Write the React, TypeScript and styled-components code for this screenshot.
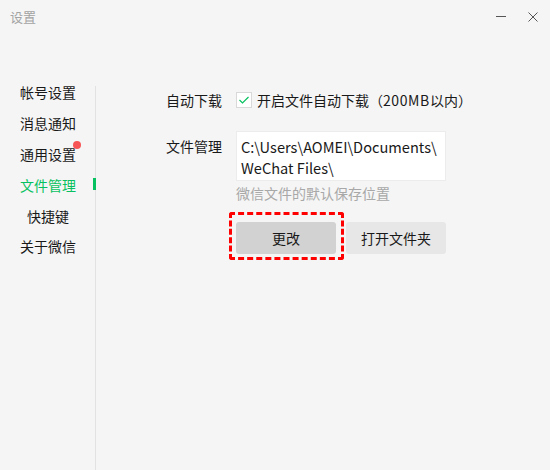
import styled, { createGlobalStyle } from 'styled-components';

const GlobalStyle = createGlobalStyle`
  html, body {
    margin: 0;
    padding: 0;
    background: #f5f5f5;
  }
  body {
    font-family: "Noto Sans CJK SC", "Noto Sans", sans-serif;
    color: #191919;
  }
`;

const Window = styled.div`
  width: 550px;
  height: 470px;
  background: #f5f5f5;
  display: flex;
  flex-direction: column;
  overflow: hidden;
`;

const TitleBar = styled.div`
  height: 77px;
  display: flex;
  align-items: flex-start;
  padding: 8px 12px 0 10px;
  box-sizing: border-box;
`;

const Title = styled.div`
  font-size: 13px;
  line-height: 18px;
  color: #a3a3a3;
  flex: 1;
`;

const Controls = styled.div`
  display: flex;
  gap: 22px;
  padding-top: 1px;
`;

const ControlButton = styled.button`
  width: 10px;
  height: 16px;
  padding: 0;
  border: none;
  background: none;
  display: flex;
  align-items: center;
  justify-content: center;
`;

const Body = styled.div`
  flex: 1;
  display: flex;
`;

const Sidebar = styled.nav`
  width: 96px;
  flex-shrink: 0;
  position: relative;

  &::after {
    content: '';
    position: absolute;
    top: 9px;
    right: 0;
    bottom: 0;
    width: 1px;
    background: #e2e2e2;
  }
`;

const NavItem = styled.div<{ $active?: boolean }>`
  height: 30.8px;
  display: flex;
  align-items: center;
  justify-content: center;
  font-size: 14px;
  color: ${({ $active }) => ($active ? '#07c160' : '#191919')};
  position: relative;

  &::after {
    content: '';
    display: ${({ $active }) => ($active ? 'block' : 'none')};
    position: absolute;
    right: 0;
    top: 9px;
    width: 3px;
    height: 12px;
    background: #07c160;
    z-index: 1;
  }
`;

const NavLabel = styled.span`
  position: relative;
  line-height: 1;
`;

const Dot = styled.span`
  position: absolute;
  right: -5px;
  top: -6px;
  width: 8px;
  height: 8px;
  border-radius: 50%;
  background: #f75555;
`;

const Content = styled.div`
  flex: 1;
  padding: 13px 0 0 70px;
  display: flex;
  flex-direction: column;
`;

const Row = styled.div<{ $top?: boolean }>`
  display: flex;
  align-items: ${({ $top }) => ($top ? 'flex-start' : 'center')};
  margin-bottom: 21px;
`;

const Label = styled.div<{ $pad?: number }>`
  width: 70px;
  flex-shrink: 0;
  font-size: 14px;
  line-height: 20px;
  padding-top: ${({ $pad }) => $pad ?? 0}px;
`;

const CheckLine = styled.label`
  display: flex;
  align-items: center;
  gap: 5px;
  font-size: 14px;
  line-height: 20px;
`;

const Latin = styled.span`
  letter-spacing: 0.6px;
`;

const CheckBox = styled.span`
  width: 16px;
  height: 16px;
  box-sizing: border-box;
  border: 1px solid #d9d9d9;
  background: #ffffff;
  display: flex;
  align-items: center;
  justify-content: center;
`;

const Field = styled.div`
  display: flex;
  flex-direction: column;
`;

const PathBox = styled.div`
  width: 210px;
  box-sizing: border-box;
  background: #ffffff;
  border: 1px solid #ececec;
  padding: 4px 4px 2px 4px;
  font-size: 14.6px;
  line-height: 21px;
  color: #191919;
`;

const Hint = styled.div`
  font-size: 14px;
  line-height: 19px;
  color: #a8a8a8;
  margin-top: 3px;
`;

const ButtonRow = styled.div`
  display: flex;
  gap: 10px;
  margin-top: 19px;
`;

const Highlight = styled.div`
  position: relative;

  &::after {
    content: '';
    position: absolute;
    top: -10px;
    left: -7px;
    right: -8px;
    bottom: -6px;
    border: 3px dashed #ff0000;
    border-radius: 3px;
    pointer-events: none;
  }
`;

const Button = styled.button<{ $primary?: boolean }>`
  width: 100px;
  height: 32px;
  border: none;
  border-radius: 3px;
  background: ${({ $primary }) => ($primary ? '#d2d2d2' : '#e7e7e7')};
  font-family: "Noto Sans CJK SC", "Noto Sans", sans-serif;
  font-size: 14px;
  color: #191919;
  padding: 0;
`;

const navItems = ['帐号设置', '消息通知', '通用设置', '文件管理', '快捷键', '关于微信'];

export default function App() {
  return (
    <>
      <GlobalStyle />
      <Window>
        <TitleBar>
          <Title>设置</Title>
          <Controls>
            <ControlButton aria-label="minimize">
              <svg width="10" height="10" viewBox="0 0 10 10">
                <line x1="0" y1="4.5" x2="10" y2="4.5" stroke="#555" strokeWidth="1" />
              </svg>
            </ControlButton>
            <ControlButton aria-label="close">
              <svg width="10" height="10" viewBox="0 0 10 10">
                <path d="M0.5 0.5 L9.5 9.5 M9.5 0.5 L0.5 9.5" stroke="#555" strokeWidth="1" />
              </svg>
            </ControlButton>
          </Controls>
        </TitleBar>
        <Body>
          <Sidebar>
            {navItems.map((item) => (
              <NavItem key={item} $active={item === '文件管理'}>
                <NavLabel>
                  {item}
                  {item === '通用设置' && <Dot />}
                </NavLabel>
              </NavItem>
            ))}
          </Sidebar>
          <Content>
            <Row>
              <Label>自动下载</Label>
              <CheckLine>
                <CheckBox>
                  <svg width="12" height="12" viewBox="0 0 12 12">
                    <polyline points="1.5,6 4.5,9 10.5,3" fill="none" stroke="#07c160" strokeWidth="1.2" />
                  </svg>
                </CheckBox>
                <span>
                  开启文件自动下载（<Latin>200MB</Latin>以内）
                </span>
              </CheckLine>
            </Row>
            <Row $top>
              <Label $pad={5}>文件管理</Label>
              <Field>
                <PathBox>
                  C:\Users\AOMEI\Documents\
                  <br />
                  WeChat Files\
                </PathBox>
                <Hint>微信文件的默认保存位置</Hint>
                <ButtonRow>
                  <Highlight>
                    <Button $primary>更改</Button>
                  </Highlight>
                  <Button>打开文件夹</Button>
                </ButtonRow>
              </Field>
            </Row>
          </Content>
        </Body>
      </Window>
    </>
  );
}
